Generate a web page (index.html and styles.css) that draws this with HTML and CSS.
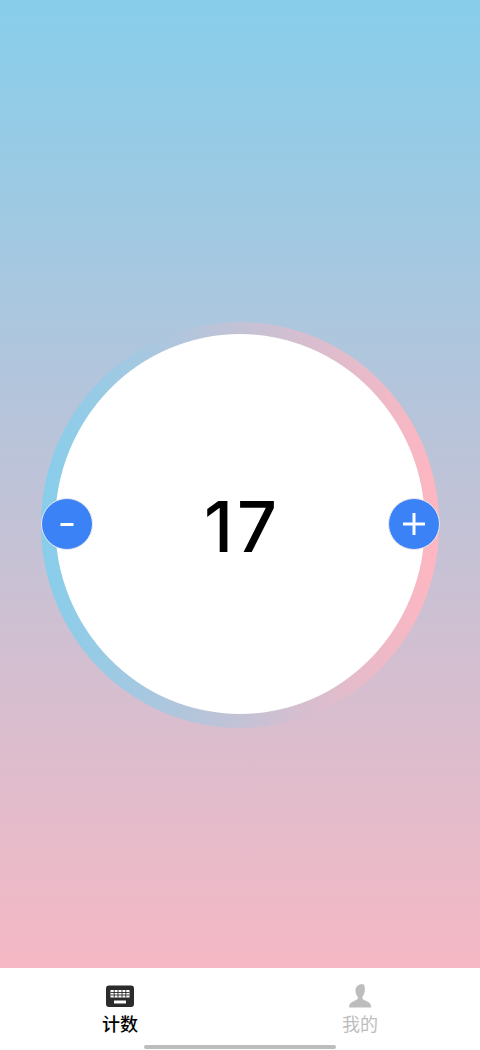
FILE: index.html
```html
<!DOCTYPE html>
<html lang="zh">
<head>
    <meta charset="UTF-8">
    <meta name="viewport" content="width=device-width, initial-scale=1.0">
    <title>计数</title>
    <link rel="stylesheet" href="styles.css">
</head>
<body>
    <main class="counter-page">
        <div class="ring">
            <div class="dial">
                <span class="count">17</span>
            </div>
            <button class="step step-minus" type="button">
                <svg viewBox="0 0 16 4" width="16" height="4"><rect width="13" height="3" x="1.5" y="1" fill="#fff"/></svg>
            </button>
            <button class="step step-plus" type="button">
                <svg viewBox="0 0 24 24" width="24" height="24"><path d="M12 1v22M1 12h22" stroke="#fff" stroke-width="3" fill="none"/></svg>
            </button>
        </div>
    </main>
    <nav class="tabbar">
        <div class="tab tab-active">
            <svg class="tab-icon" viewBox="0 0 28 24" width="28" height="24">
                <rect width="28" height="21.500" y="1.500" rx="3" fill="#2b2b2b"/>
                <path d="M4.500 6h19v7.500h-19z" fill="#fff"/>
                <path d="M8.200 6v7.500M12 6v7.500M16 6v7.500M19.800 6v7.500M4.500 8.500h19M4.500 11h19" stroke="#2b2b2b" stroke-width="0.9" fill="none"/>
                <rect width="12" height="3" x="8" y="16.500" fill="#fff"/>
            </svg>
            <span class="tab-label">计数</span>
        </div>
        <div class="tab">
            <svg class="tab-icon" viewBox="0 0 24 24" width="24" height="24">
                <path d="M16 0.500c1.200 3 1.400 7-0.200 10-0.700 1.400-1.500 2.400-1.500 3.400 0 1.200 1.600 2 4 3 2.600 1.100 4.600 2.200 5 6.600H1c0.400-4.400 2.400-5.500 5-6.600 2.400-1 4-1.800 4-3 0-1-1.400-2.200-2-4-0.900-2.800-0.700-5.600 0.800-7.400 1.600-1.900 4.600-2.400 7.200-2z" fill="#bdbdbd"/>
            </svg>
            <span class="tab-label">我的</span>
        </div>
        <div class="home-bar"></div>
    </nav>
</body>
</html>
```

FILE: styles.css
```css
* {
    box-sizing: border-box;
}

body {
    margin: 0;
    height: 1050px;
    display: flex;
    flex-direction: column;
    overflow: hidden;
    font-family: Inter, "Noto Sans CJK SC", sans-serif;
    background: linear-gradient(180deg, #87ceeb, #ffb6c1);
}

.counter-page {
    height: 968px;
    padding-top: 82px;
    display: flex;
    justify-content: center;
    align-items: center;
}

.ring {
    position: relative;
    width: 398px;
    height: 406px;
    display: flex;
    justify-content: center;
    align-items: center;
    border-radius: 50%;
    background: linear-gradient(90deg, #87ceeb, #ffb6c1);
}

.dial {
    width: 370px;
    height: 380px;
    margin-top: -2px;
    display: flex;
    justify-content: center;
    align-items: center;
    border-radius: 50%;
    background: #fff;
}

.count {
    margin: 4px 0 0 5px;
    font-size: 70px;
    font-weight: 500;
    letter-spacing: 4px;
    color: #000;
}

.step {
    position: absolute;
    top: 176px;
    width: 52px;
    height: 52px;
    padding: 0;
    display: flex;
    justify-content: center;
    align-items: center;
    border: 1px solid #e8e8ee;
    border-radius: 50%;
    background: #3b82f6;
}

.step-minus {
    left: 0;
}

.step-plus {
    right: -1px;
}

.tabbar {
    position: relative;
    height: 82px;
    padding-top: 16px;
    display: flex;
    background: #fff;
}

.tab {
    flex: 1;
    display: flex;
    flex-direction: column;
    align-items: center;
    color: #bdbdbd;
}

.tab-active {
    color: #000;
}

.tab-icon {
    display: block;
}

.tab-label {
    margin-top: 5px;
    font-size: 18px;
    line-height: 24px;
}

.tab-active .tab-label {
    font-weight: 500;
}

.home-bar {
    position: absolute;
    left: 144px;
    bottom: 1px;
    width: 192px;
    height: 4px;
    border-radius: 2px;
    background: #bdbdbd;
}
```
